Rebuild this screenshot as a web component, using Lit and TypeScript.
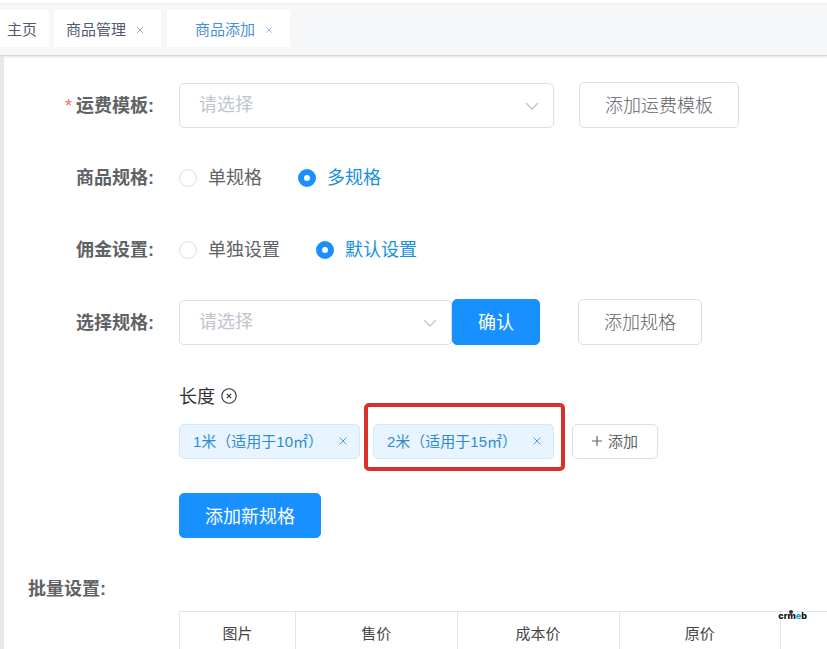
import { LitElement, html, css, svg } from "lit";
import { customElement, state } from "lit/decorators.js";

interface Tab {
  title: string;
  active?: boolean;
  closable?: boolean;
}

const cross = (label: string) => html`
  <svg viewBox="0 0 10 10" role="img" aria-label=${label}>
    ${svg`<path d="M1.5 1.5L8.5 8.5M8.5 1.5L1.5 8.5" fill="none" stroke="currentColor" stroke-width="1"/>`}
  </svg>
`;

@customElement("app-root")
export class AppRoot extends LitElement {
  @state() private spec = "多规格";
  @state() private commission = "默认设置";

  private tabs: Tab[] = [
    { title: "主页" },
    { title: "商品管理", closable: true },
    { title: "商品添加", closable: true, active: true },
  ];
  private sizes = ["1米（适用于10㎡）", "2米（适用于15㎡）"];
  private columns = ["图片", "售价", "成本价", "原价", ""];

  static styles = css`
    :host {
      display: flex;
      flex-direction: column;
      height: 100vh;
      overflow: hidden;
      position: relative;
      background: #fff;
      color: #606266;
      font-family: "Liberation Sans", "Noto Sans CJK SC", sans-serif;
      font-size: 18px;
    }
    * {
      box-sizing: border-box;
    }
    button,
    select {
      font: inherit;
      margin: 0;
    }
    button {
      cursor: pointer;
    }
    .tabs {
      flex: none;
      display: flex;
      align-items: center;
      height: 53px;
      margin-top: 3px;
      padding-bottom: 4px;
      background: #f5f7f9;
      border-top: 2px solid #eff0f2;
      border-bottom: 1px solid #d3d5d8;
      box-shadow: 0 1px 2px #e2e3e5;
      font-size: 15px;
      z-index: 1;
    }
    .tab {
      display: flex;
      align-items: center;
      height: 37px;
      background: #fff;
      color: #515a6e;
      text-decoration: none;
      padding: 0 12px 0 7px;
      margin-right: 5px;
    }
    .tab.closable {
      padding: 0 17px 0 12px;
      margin-right: 6px;
    }
    .tab.active {
      color: #4a90d0;
      padding: 0 17px 0 28px;
    }
    .tab svg {
      width: 8px;
      height: 8px;
      margin: 3px 0 0 10px;
      opacity: 0.7;
    }
    .page {
      flex: 1;
      min-height: 0;
      overflow: auto;
      scrollbar-width: none;
      border-left: 4px solid #e9e9e9;
      padding-top: 26px;
    }
    .form {
      display: flex;
      flex-direction: column;
      gap: 27px;
    }
    .row {
      display: flex;
      align-items: center;
      min-height: 45px;
    }
    .label {
      flex: none;
      width: 175px;
      padding: 0 25px 3px 0;
      text-align: right;
      font-weight: 700;
      white-space: nowrap;
    }
    .label.wide {
      width: 127px;
    }
    .required {
      color: #f56c6c;
      font-weight: 400;
      margin-right: 4px;
    }
    .select {
      position: relative;
      width: 375px;
    }
    .select.short {
      width: 273px;
    }
    .select select {
      display: block;
      appearance: none;
      width: 100%;
      height: 45px;
      padding: 0 40px 0 19px;
      border: 1px solid #dcdee2;
      border-radius: 5px;
      background: #fff;
      color: #c0c4cc;
    }
    .select svg {
      position: absolute;
      right: 14px;
      top: 15px;
      width: 16px;
      height: 16px;
      color: #c0c4cc;
      pointer-events: none;
    }
    .btn {
      height: 46px;
      padding: 0 25px 2px;
      border: 1px solid #dcdee2;
      border-radius: 5px;
      background: #fff;
      color: #606266;
      font-weight: 300;
      white-space: nowrap;
    }
    .btn.primary {
      background: #1890ff;
      border-color: #1890ff;
      color: #fff;
      font-weight: 400;
    }
    .btn.side {
      margin-left: 25px;
    }
    .btn.far {
      margin-left: 38px;
    }
    .radio {
      display: flex;
      align-items: center;
      gap: 11px;
      margin-right: 36px;
      cursor: pointer;
    }
    .radio span {
      padding-bottom: 3px;
    }
    .radio input {
      appearance: none;
      width: 18px;
      height: 18px;
      margin: 0;
      border: 1px solid #dcdee2;
      border-radius: 50%;
      background: #fff;
    }
    .radio input:checked {
      border: 6px solid #1890ff;
    }
    .radio.on {
      color: #1890e0;
    }
    .specs {
      margin: 37px 0 28px 175px;
    }
    .name {
      display: flex;
      align-items: center;
      gap: 6px;
      height: 28px;
      color: #303133;
    }
    .name span {
      padding-bottom: 2px;
    }
    .remove,
    .close {
      display: flex;
      padding: 0;
      border: 0;
      background: none;
      color: inherit;
    }
    .remove svg {
      width: 16px;
      height: 16px;
    }
    .tags {
      display: flex;
      align-items: center;
      gap: 13px;
      margin: 14px 0 34px;
      font-size: 15px;
    }
    .tag {
      position: relative;
      display: flex;
      align-items: center;
      gap: 15px;
      height: 35px;
      padding: 0 11px 2px 13px;
      border: 1px solid #d1e9fb;
      border-radius: 5px;
      background: #e8f4ff;
      color: #2d8cd0;
      white-space: nowrap;
    }
    .tag svg {
      width: 10px;
      height: 10px;
      opacity: 0.8;
    }
    .tag.marked::after {
      content: "";
      position: absolute;
      inset: -22px -12px -13px -10px;
      border: 4px solid #d9302c;
      border-radius: 5px;
      pointer-events: none;
    }
    .btn.add {
      display: flex;
      align-items: center;
      gap: 6px;
      height: 35px;
      margin-left: 5px;
      padding: 0 19px 2px;
      font-weight: 400;
    }
    .add svg {
      width: 10px;
      height: 10px;
    }
    .btn.new {
      display: block;
      height: 45px;
    }
    table {
      margin-left: 175px;
      width: 764px;
      border-collapse: collapse;
      table-layout: fixed;
      font-size: 15px;
    }
    th {
      height: 45px;
      padding: 0 0 3px;
      border: 1px solid #e3e5e8;
      font-weight: 400;
      color: #444;
    }
    th:first-child {
      width: 116px;
    }
    .logo {
      position: absolute;
      right: 20px;
      top: 609px;
      display: flex;
      color: #111;
      font: 800 9px/14px Inter, sans-serif;
    }
    .logo span {
      color: #1ba0e2;
    }
    .logo svg {
      position: absolute;
      left: 11px;
      top: 1px;
      width: 4px;
      height: 4px;
    }
  `;

  private arrow() {
    return html`<svg viewBox="0 0 16 16" aria-hidden="true">
      <path d="M2 5l6 6 6-6" fill="none" stroke="currentColor" stroke-width="1.3" />
    </svg>`;
  }

  private radio(group: string, value: string, current: string, pick: (v: string) => void) {
    const on = value === current;
    return html`<label class="radio ${on ? "on" : ""}">
      <input type="radio" name=${group} .checked=${on} @change=${() => pick(value)} />
      <span>${value}</span>
    </label>`;
  }

  render() {
    return html`
      <nav class="tabs">
        ${this.tabs.map(
          (t) => html`<a href="#" class="tab ${t.closable ? "closable" : ""} ${t.active ? "active" : ""}"
            >${t.title}${t.closable ? cross("关闭") : ""}</a
          >`
        )}
      </nav>
      <main class="page">
        <div class="form">
          <div class="row">
            <label class="label" for="freight"><span class="required">*</span>运费模板:</label>
            <div class="select">
              <select id="freight"><option>请选择</option></select>
              ${this.arrow()}
            </div>
            <button class="btn side">添加运费模板</button>
          </div>
          <div class="row" role="radiogroup" aria-labelledby="spec">
            <span class="label" id="spec">商品规格:</span>
            ${["单规格", "多规格"].map((v) => this.radio("spec", v, this.spec, (x) => (this.spec = x)))}
          </div>
          <div class="row" role="radiogroup" aria-labelledby="commission">
            <span class="label" id="commission">佣金设置:</span>
            ${["单独设置", "默认设置"].map((v) =>
              this.radio("commission", v, this.commission, (x) => (this.commission = x))
            )}
          </div>
          <div class="row">
            <label class="label" for="choose">选择规格:</label>
            <div class="select short">
              <select id="choose"><option>请选择</option></select>
              ${this.arrow()}
            </div>
            <button class="btn primary">确认</button>
            <button class="btn far">添加规格</button>
          </div>
        </div>
        <section class="specs">
          <div class="name">
            <span>长度</span>
            <button class="remove" aria-label="删除长度">
              <svg viewBox="0 0 16 16" fill="none" stroke="currentColor" stroke-width="1.1">
                <circle cx="8" cy="8" r="7.2" />
                <path d="M5.8 5.8l4.4 4.4M10.2 5.8l-4.4 4.4" />
              </svg>
            </button>
          </div>
          <div class="tags">
            ${this.sizes.map(
              (s, i) => html`<span class="tag ${i === 1 ? "marked" : ""}"
                >${s}<button class="close">${cross("删除")}</button></span
              >`
            )}
            <button class="btn add">
              <svg viewBox="0 0 10 10" aria-hidden="true">
                <path d="M5 0v10M0 5h10" stroke="currentColor" stroke-width="1.2" /></svg
              >添加
            </button>
          </div>
          <button class="btn primary new">添加新规格</button>
        </section>
        <div class="row"><span class="label wide" id="batch">批量设置:</span></div>
        <table aria-labelledby="batch">
          <thead>
            <tr>
              ${this.columns.map((c) => html`<th scope="col">${c}</th>`)}
            </tr>
          </thead>
        </table>
      </main>
      <div class="logo">
        crm<span>e</span>b
        <svg viewBox="0 0 4 4" aria-hidden="true"><circle cx="2" cy="2" r="2" fill="#333" /></svg>
      </div>
    `;
  }
}
